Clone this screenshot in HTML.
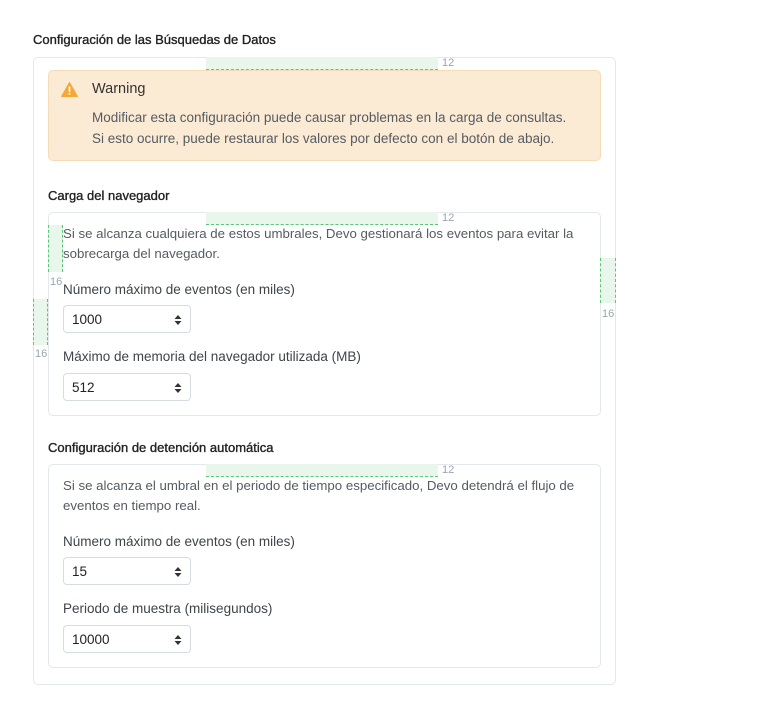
<!DOCTYPE html>
<html><head><meta charset="utf-8"><style>
*{margin:0;padding:0;box-sizing:border-box}
body{width:768px;height:717px;background:#fff;font-family:"Liberation Sans",sans-serif;position:relative;overflow:hidden;color:#4a4f55}
.a{position:absolute;white-space:nowrap}
.box{position:absolute;border:1px solid #e3e8ec;border-radius:5px;background:#fff}
.t{font-size:13px;color:#222;font-weight:normal;-webkit-text-stroke:0.35px #222}
.p{font-size:13.25px;color:#555b62}
.lab{font-size:13.5px;color:#3e444a}
.inp{position:absolute;width:128px;height:28px;border:1px solid #d5dde3;border-radius:4px;background:#fff;font-size:13.5px;color:#222;padding:6px 8px}
.inp svg{position:absolute;right:8px;top:8px}
.g{position:absolute;background:#e9f6ec;border:1px dashed #5cc57a}
.gl{position:absolute;font-size:11px;color:#9aa5ae}
</style></head><body>
<div class="a t" style="left:33px;top:32px">Configuración de las Búsquedas de Datos</div>
<div class="box" style="left:33px;top:57px;width:583px;height:628px"></div>
<div class="g" style="left:206px;top:57px;width:232px;height:13px;border-top:none;border-left:none;border-right:none"></div>
<div class="gl" style="left:442px;top:57px">12</div>
<div class="box" style="left:48px;top:70px;width:553px;height:91px;background:#fcebd4;border-color:#f6dcb5"></div>
<svg class="a" style="left:61px;top:82px" width="17" height="15" viewBox="0 0 17 15"><path d="M8.5 0.5 L16.5 14.5 L0.5 14.5 Z" fill="#f3a93a" stroke="#f3a93a" stroke-linejoin="round"/><rect x="7.7" y="4.5" width="1.6" height="5.5" fill="#fff"/><rect x="7.7" y="11" width="1.6" height="1.6" fill="#fff"/></svg>
<div class="a" style="left:92px;top:81px;font-size:14.5px;color:#333">Warning</div>
<div class="a p" style="left:92px;top:110px;font-size:13.5px">Modificar esta configuración puede causar problemas en la carga de consultas.</div>
<div class="a p" style="left:92px;top:131px;font-size:13.5px">Si esto ocurre, puede restaurar los valores por defecto con el botón de abajo.</div>

<div class="a t" style="left:48px;top:188px">Carga del navegador</div>
<div class="box" style="left:48px;top:212px;width:553px;height:204px"></div>
<div class="g" style="left:206px;top:212px;width:232px;height:13px;border-top:none;border-left:none;border-right:none"></div>
<div class="gl" style="left:442px;top:212px">12</div>
<div class="g" style="left:48px;top:225px;width:15px;height:47px;border-top:none;border-bottom:none"></div>
<div class="gl" style="left:50px;top:276px">16</div>
<div class="g" style="left:33px;top:299px;width:15px;height:46px;border-top:none;border-bottom:none"></div>
<div class="gl" style="left:35px;top:348px">16</div>
<div class="g" style="left:600px;top:258px;width:16px;height:45px;border-top:none;border-bottom:none"></div>
<div class="gl" style="left:602px;top:308px">16</div>
<div class="a p" style="left:63px;top:226px">Si se alcanza cualquiera de estos umbrales, Devo gestionará los eventos para evitar la</div>
<div class="a p" style="left:63px;top:246px">sobrecarga del navegador.</div>
<div class="a lab" style="left:63px;top:282px">Número máximo de eventos (en miles)</div>
<div class="inp" style="left:63px;top:305px">1000<svg width="8" height="12" viewBox="0 0 8 12"><path d="M4 1L7.5 5H0.5Z M4 11L7.5 7H0.5Z" fill="#333"/></svg></div>
<div class="a lab" style="left:63px;top:349px">Máximo de memoria del navegador utilizada (MB)</div>
<div class="inp" style="left:63px;top:373px">512<svg width="8" height="12" viewBox="0 0 8 12"><path d="M4 1L7.5 5H0.5Z M4 11L7.5 7H0.5Z" fill="#333"/></svg></div>

<div class="a t" style="left:48px;top:440px">Configuración de detención automática</div>
<div class="box" style="left:48px;top:464px;width:553px;height:204px"></div>
<div class="g" style="left:206px;top:464px;width:232px;height:13px;border-top:none;border-left:none;border-right:none"></div>
<div class="gl" style="left:442px;top:464px">12</div>
<div class="a p" style="left:63px;top:478px">Si se alcanza el umbral en el periodo de tiempo especificado, Devo detendrá el flujo de</div>
<div class="a p" style="left:63px;top:498px">eventos en tiempo real.</div>
<div class="a lab" style="left:63px;top:534px">Número máximo de eventos (en miles)</div>
<div class="inp" style="left:63px;top:557px">15<svg width="8" height="12" viewBox="0 0 8 12"><path d="M4 1L7.5 5H0.5Z M4 11L7.5 7H0.5Z" fill="#333"/></svg></div>
<div class="a lab" style="left:63px;top:601px">Periodo de muestra (milisegundos)</div>
<div class="inp" style="left:63px;top:625px">10000<svg width="8" height="12" viewBox="0 0 8 12"><path d="M4 1L7.5 5H0.5Z M4 11L7.5 7H0.5Z" fill="#333"/></svg></div>
</body></html>
